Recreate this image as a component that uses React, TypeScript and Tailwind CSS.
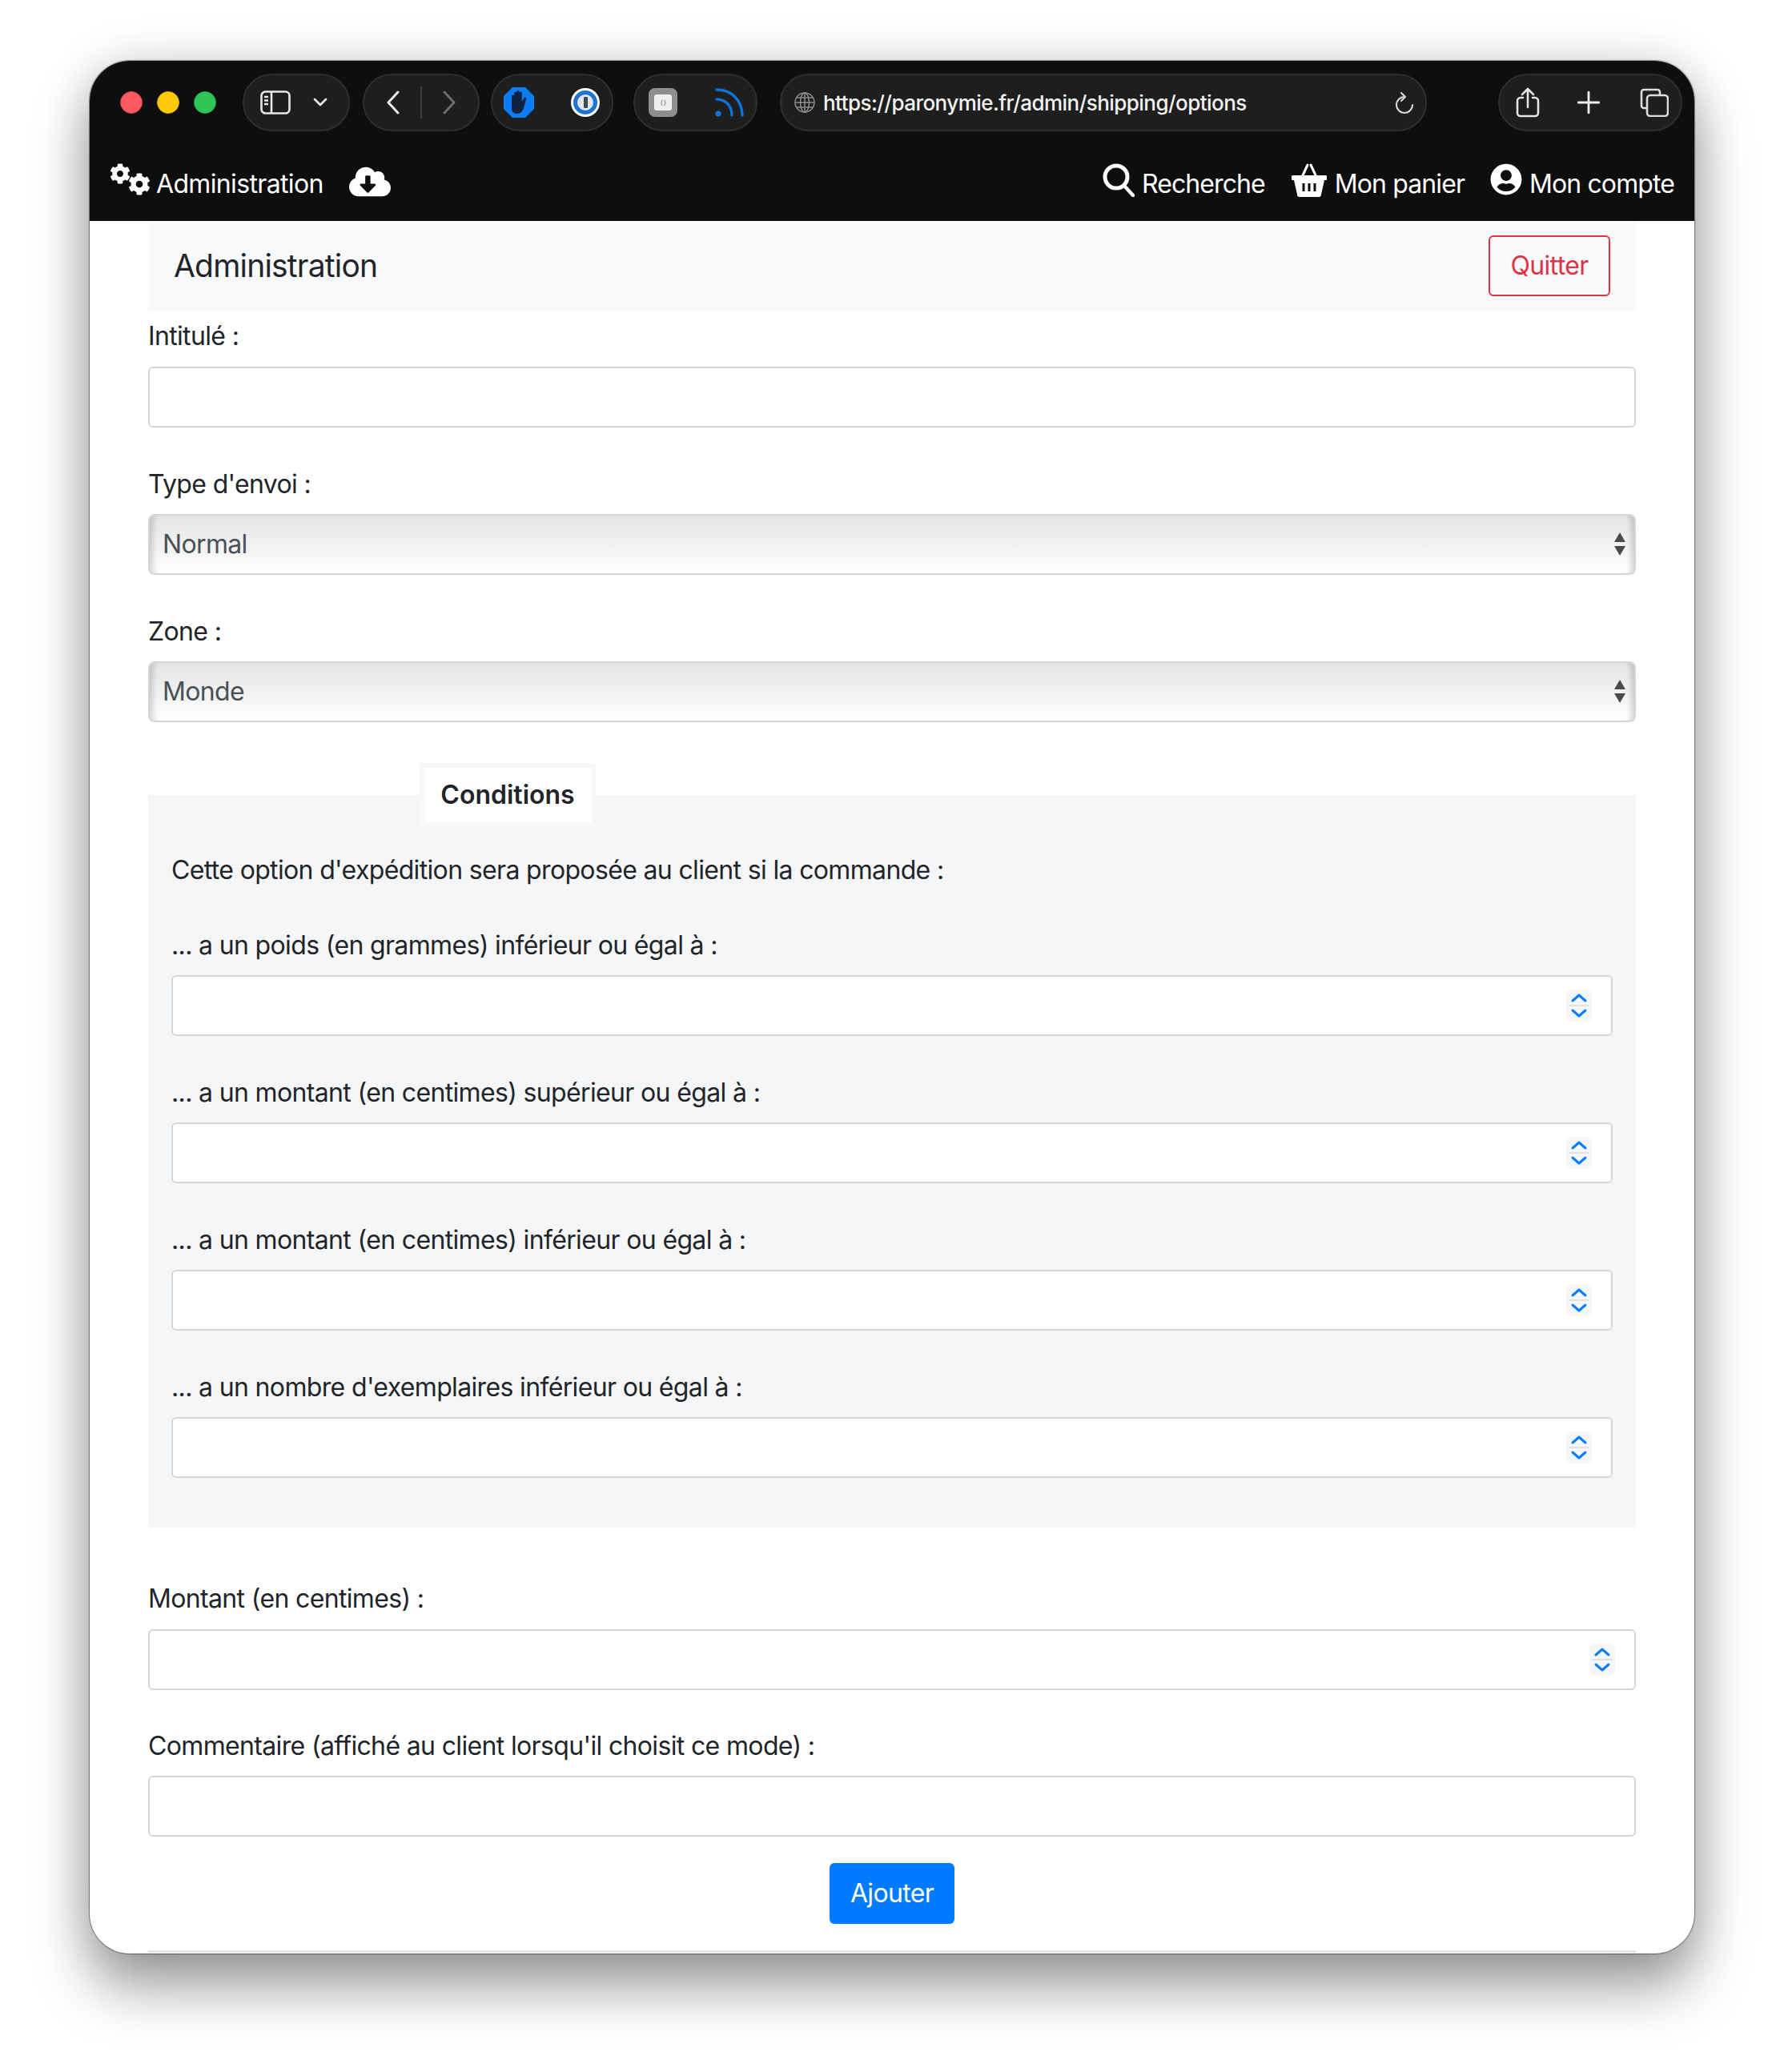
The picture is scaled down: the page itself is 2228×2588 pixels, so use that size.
import { FaCog, FaCloudDownloadAlt, FaUserCircle } from 'react-icons/fa';

const inputCls = 'block w-full h-[76px] rounded-[6px] border-2 border-[#d3d6d9] bg-white px-[18px] text-[32px] text-[#495057]';

function Pill({ className, children }: { className: string; children?: React.ReactNode }) {
  return (
    <div className={`flex h-[72px] items-center rounded-[36px] border-2 border-[#2e2e2e] bg-[#1e1e1e] ${className}`}>
      {children}
    </div>
  );
}

function Stepper() {
  return (
    <div className="absolute right-[26px] top-[18px] flex h-[40px] w-[32px] items-center justify-center rounded-[8px] bg-[#f5f6f8]">
      <svg width="26" height="36" viewBox="0 0 26 36" fill="none" stroke="#0a7cf5" strokeWidth="3" strokeLinecap="round" strokeLinejoin="round">
        <path d="M5 12 13 5l8 7" />
        <path d="M1 18h24" stroke="#d9d9d9" strokeWidth="1.5" />
        <path d="M5 24l8 7 8-7" />
      </svg>
    </div>
  );
}

function NumberField({ label, className, gap = 'mb-[12px]' }: { label: string; className?: string; gap?: string }) {
  return (
    <div className={className}>
      <label className={`${gap} block h-[50px] leading-[50px]`}>{label}</label>
      <div className="relative">
        <input type="text" className={inputCls} />
        <Stepper />
      </div>
    </div>
  );
}

function SelectField({ label, value }: { label: string; value: string }) {
  return (
    <div className="mt-[46px]">
      <label className="mb-[12px] block h-[50px] leading-[50px]">{label}</label>
      <div className="relative">
        <select
          defaultValue={value}
          className="block h-[76px] w-full appearance-none rounded-[8px] border-2 border-[#d3d6d9] bg-linear-to-b from-[#e3e4e5] via-[#f0f1f1] to-white px-[16px] text-[32px] tracking-[-0.65px] text-[#495057] shadow-[inset_9px_0_6px_-5px_rgba(0,0,0,0.16),inset_-9px_0_6px_-5px_rgba(0,0,0,0.16)]"
        >
          <option>{value}</option>
        </select>
        <svg className="pointer-events-none absolute right-[13px] top-[23px]" width="14" height="30" viewBox="0 0 14 30" fill="#4a4a4a">
          <path d="M7 0 14 12H0z" />
          <path d="M0 17h14L7 29z" />
        </svg>
      </div>
    </div>
  );
}

export default function App() {
  return (
    <div className="min-h-[2588px] bg-white pl-[112px] pr-[112px] pt-[76px] font-['Inter',sans-serif] text-[32px] tracking-[-0.65px] text-[#212529]">
      <div className="h-[2364px] w-[2004px] overflow-hidden rounded-[50px] bg-white shadow-[0_0_1px_1px_rgba(0,0,0,0.4),0_42px_70px_rgba(0,0,0,0.38),0_0_60px_rgba(0,0,0,0.14)]">
        {/* barre safari + nav */}
        <header className="h-[200px] bg-[#0e0e0f] text-white">
          <div className="flex h-[104px] items-start pt-[16px]">
            <div className="ml-[38px] mt-[22px] flex gap-[18px]">
              <span className="h-[28px] w-[28px] rounded-full border border-[#d9424d] bg-[#ff5a62]" />
              <span className="h-[28px] w-[28px] rounded-full border border-[#e0ac08] bg-[#fec909]" />
              <span className="h-[28px] w-[28px] rounded-full border border-[#23a94a] bg-[#30c657]" />
            </div>
            <Pill className="ml-[33px] w-[134px] pl-[20px]">
              <svg width="38" height="30" viewBox="0 0 38 30" fill="none" stroke="#e8e8e8" strokeWidth="2.6">
                <rect x="1.5" y="1.5" width="35" height="27" rx="5" />
                <path d="M14 1.5v27M5 8h5M5 12.5h5M5 17h5" />
              </svg>
              <svg className="ml-[28px]" width="18" height="12" viewBox="0 0 18 12" fill="none" stroke="#e8e8e8" strokeWidth="2.6" strokeLinecap="round" strokeLinejoin="round">
                <path d="M2 2l7 7 7-7" />
              </svg>
            </Pill>
            <Pill className="ml-[16px] w-[146px] pl-[27px]">
              <svg width="18" height="30" viewBox="0 0 18 30" fill="none" stroke="#eaeaea" strokeWidth="3" strokeLinecap="round" strokeLinejoin="round">
                <path d="M15 2 3 15l12 13" />
              </svg>
              <span className="ml-[25px] h-[40px] w-[2px] bg-[#3d3d3d]" />
              <svg className="ml-[25px]" width="18" height="30" viewBox="0 0 18 30" fill="none" stroke="#6b6b6b" strokeWidth="3" strokeLinecap="round" strokeLinejoin="round">
                <path d="M3 2l12 13L3 28" />
              </svg>
            </Pill>
            <Pill className="ml-[14px] w-[153px] pl-[14px]">
              <svg width="38" height="38" viewBox="0 0 38 38">
                <path d="M11 0h16l11 11v16L27 38H11L0 27V11z" fill="#0a7cf5" />
                <path d="M10 18V11a1.6 1.6 0 0 1 3.2 0V7a1.6 1.6 0 0 1 3.2 0V5.5a1.6 1.6 0 0 1 3.2 0V7a1.6 1.6 0 0 1 3.2 0v11l2.4-4.5c1-2 4-1 3 1.2L25 26c-1.4 4-4 7-8 7-5 0-7-3-7-7z" fill="#0d2340" />
              </svg>
              <div className="ml-[46px] flex h-[36px] w-[36px] items-center justify-center rounded-full bg-white">
                <div className="flex h-[30px] w-[30px] items-center justify-center rounded-full border-[5px] border-[#1f74d0] bg-[#dfe6ee]">
                  <span className="h-[14px] w-[5px] rounded-[1px] bg-[#3d4a58]" />
                </div>
              </div>
            </Pill>
            <Pill className="ml-[25px] w-[155px] pl-[17px]">
              <div className="flex h-[36px] w-[36px] items-center justify-center rounded-[8px] bg-[#8f8f8f]">
                <div className="flex h-[20px] w-[22px] items-center justify-center rounded-[3px] bg-[#efefef] text-[8px] leading-none text-[#666]">{'{ }'}</div>
              </div>
              <svg className="ml-[47px]" width="36" height="36" viewBox="0 0 36 36" fill="none" stroke="#0f72d8" strokeWidth="3.4" strokeLinecap="round">
                <circle cx="4" cy="32" r="3.6" fill="#0f72d8" stroke="none" />
                <path d="M2 14c11 0 19 8 19 20" />
                <path d="M2 2c19 0 32 14 32 32" />
              </svg>
            </Pill>
            <Pill className="ml-[28px] w-[808px] pl-[16px]">
              <svg width="26" height="26" viewBox="0 0 26 26" fill="none" stroke="#8a8a8a" strokeWidth="1.6">
                <circle cx="13" cy="13" r="12" />
                <ellipse cx="13" cy="13" rx="5.5" ry="12" />
                <path d="M13 1v24M1 13h24M3 7h20M3 19h20" />
              </svg>
              <span className="ml-[10px] text-[26px] font-medium tracking-[-0.55px] text-[#f2f2f2]">https://paronymie.fr/admin/shipping/options</span>
              <svg className="ml-auto mr-[14px]" width="24" height="28" viewBox="0 0 24 28" fill="none" stroke="#d8d8d8" strokeWidth="2" strokeLinecap="round" strokeLinejoin="round">
                <path d="M12 7A10 10 0 1 0 22 17" />
                <path d="M8 2l5 5-5 5" />
              </svg>
            </Pill>
            <Pill className="ml-[89px] w-[230px] pl-[20px]">
              <svg width="30" height="38" viewBox="0 0 30 38" fill="none" stroke="#e4e4e4" strokeWidth="2.6" strokeLinecap="round" strokeLinejoin="round">
                <path d="M9 13H6a4 4 0 0 0-4 4v15a4 4 0 0 0 4 4h18a4 4 0 0 0 4-4V17a4 4 0 0 0-4-4h-3" />
                <path d="M15 25V2M8 9l7-7 7 7" />
              </svg>
              <svg className="ml-[47px]" width="28" height="28" viewBox="0 0 28 28" fill="none" stroke="#efefef" strokeWidth="2.8" strokeLinecap="round">
                <path d="M14 1v26M1 14h26" />
              </svg>
              <svg className="ml-[50px]" width="36" height="36" viewBox="0 0 36 36" fill="none" stroke="#dcdcdc" strokeWidth="2.6">
                <path d="M8 25H5a3 3 0 0 1-3-3V5a3 3 0 0 1 3-3h17a3 3 0 0 1 3 3v4" />
                <rect x="9" y="9" width="26" height="26" rx="4" />
              </svg>
            </Pill>
          </div>
          <nav className="flex h-[96px] items-start pl-[25px] pr-[25px] pt-[24px]">
            <div className="flex h-[42px] w-[50px]">
              <FaCog className="h-[26px] w-[26px] shrink-0" />
              <FaCog className="-ml-[3px] mt-[12px] h-[28px] w-[28px] shrink-0" />
            </div>
            <span className="ml-[8px] mt-[2px] leading-[48px]">Administration</span>
            <FaCloudDownloadAlt className="ml-[32px] mt-[2px] h-[42px] w-[52px]" />
            <div className="ml-auto flex tracking-[-0.9px]">
              <svg width="40" height="42" viewBox="0 0 40 42" fill="none" stroke="white" strokeLinecap="round">
                <circle cx="17" cy="17" r="14" strokeWidth="5" />
                <path d="M27 28l11 12" strokeWidth="4.5" />
              </svg>
              <span className="ml-[9px] mt-[2px] leading-[48px]">Recherche</span>
              <svg className="ml-[33px]" width="44" height="42" viewBox="0 0 44 42">
                <path d="M13 17 20 2M31 17 24 2" fill="none" stroke="white" strokeWidth="3" strokeLinecap="round" />
                <path d="M2 15h40a2 2 0 0 1 0 6h-1l-4 18a3 3 0 0 1-3 3H10a3 3 0 0 1-3-3L3 21H2a2 2 0 0 1 0-6z" fill="white" />
                <path d="M15 25v10M22 25v10M29 25v10" stroke="#0e0e0f" strokeWidth="3" />
              </svg>
              <span className="ml-[10px] mt-[2px] leading-[48px]">Mon panier</span>
              <FaUserCircle className="ml-[32px] h-[40px] w-[40px]" />
              <span className="ml-[9px] mt-[2px] leading-[48px]">Mon compte</span>
            </div>
          </nav>
        </header>

        <main className="px-[73px]">
          <div className="flex h-[112px] items-center justify-between bg-[#f8f9fa] pl-[32px] pr-[32px]">
            <h1 className="text-[39px] font-normal tracking-[-0.8px]">Administration</h1>
            <button className="h-[76px] w-[152px] rounded-[6px] border-2 border-[#dc3545] text-[32px] text-[#dc3545]">Quitter</button>
          </div>

          <div className="mt-[7px]">
            <label className="mb-[13px] block h-[50px] leading-[50px]">Intitulé :</label>
            <input type="text" className={inputCls} />
          </div>
          <SelectField label="Type d'envoi :" value="Normal" />
          <SelectField label="Zone :" value="Monde" />

          {/* fieldset conditions */}
          <section className="relative mt-[91px] h-[915px] bg-[#f5f6f7] px-[29px] pt-[69px]">
            <div className="absolute left-[339px] top-[-40px] h-[80px] w-[220px] rounded-t-[2px] bg-[#f7f8f8] px-[6px] pt-[6px]">
              <div className="flex h-[68px] items-center justify-center bg-white font-semibold tracking-[0px]">Conditions</div>
            </div>
            <p className="h-[50px] leading-[50px]">Cette option d'expédition sera proposée au client si la commande :</p>
            <NumberField className="mt-[44px]" label="... a un poids (en grammes) inférieur ou égal à :" />
            <NumberField className="mt-[46px]" label="... a un montant (en centimes) supérieur ou égal à :" />
            <NumberField className="mt-[46px]" label="... a un montant (en centimes) inférieur ou égal à :" />
            <NumberField className="mt-[46px]" label="... a un nombre d'exemplaires inférieur ou égal à :" />
          </section>

          <NumberField className="mt-[64px]" gap="mb-[13px]" label="Montant (en centimes) :" />
          <div className="mt-[45px]">
            <label className="mb-[12px] block h-[50px] leading-[50px]">Commentaire (affiché au client lorsqu'il choisit ce mode) :</label>
            <input type="text" className={inputCls} />
          </div>

          <div className="mt-[33px] flex justify-center">
            <button className="h-[76px] w-[156px] rounded-[6px] bg-[#007bff] text-[32px] text-white">Ajouter</button>
          </div>
          <hr className="mt-[33px] border-t-[3px] border-[#e3e3e3]" />
        </main>
      </div>
    </div>
  );
}
